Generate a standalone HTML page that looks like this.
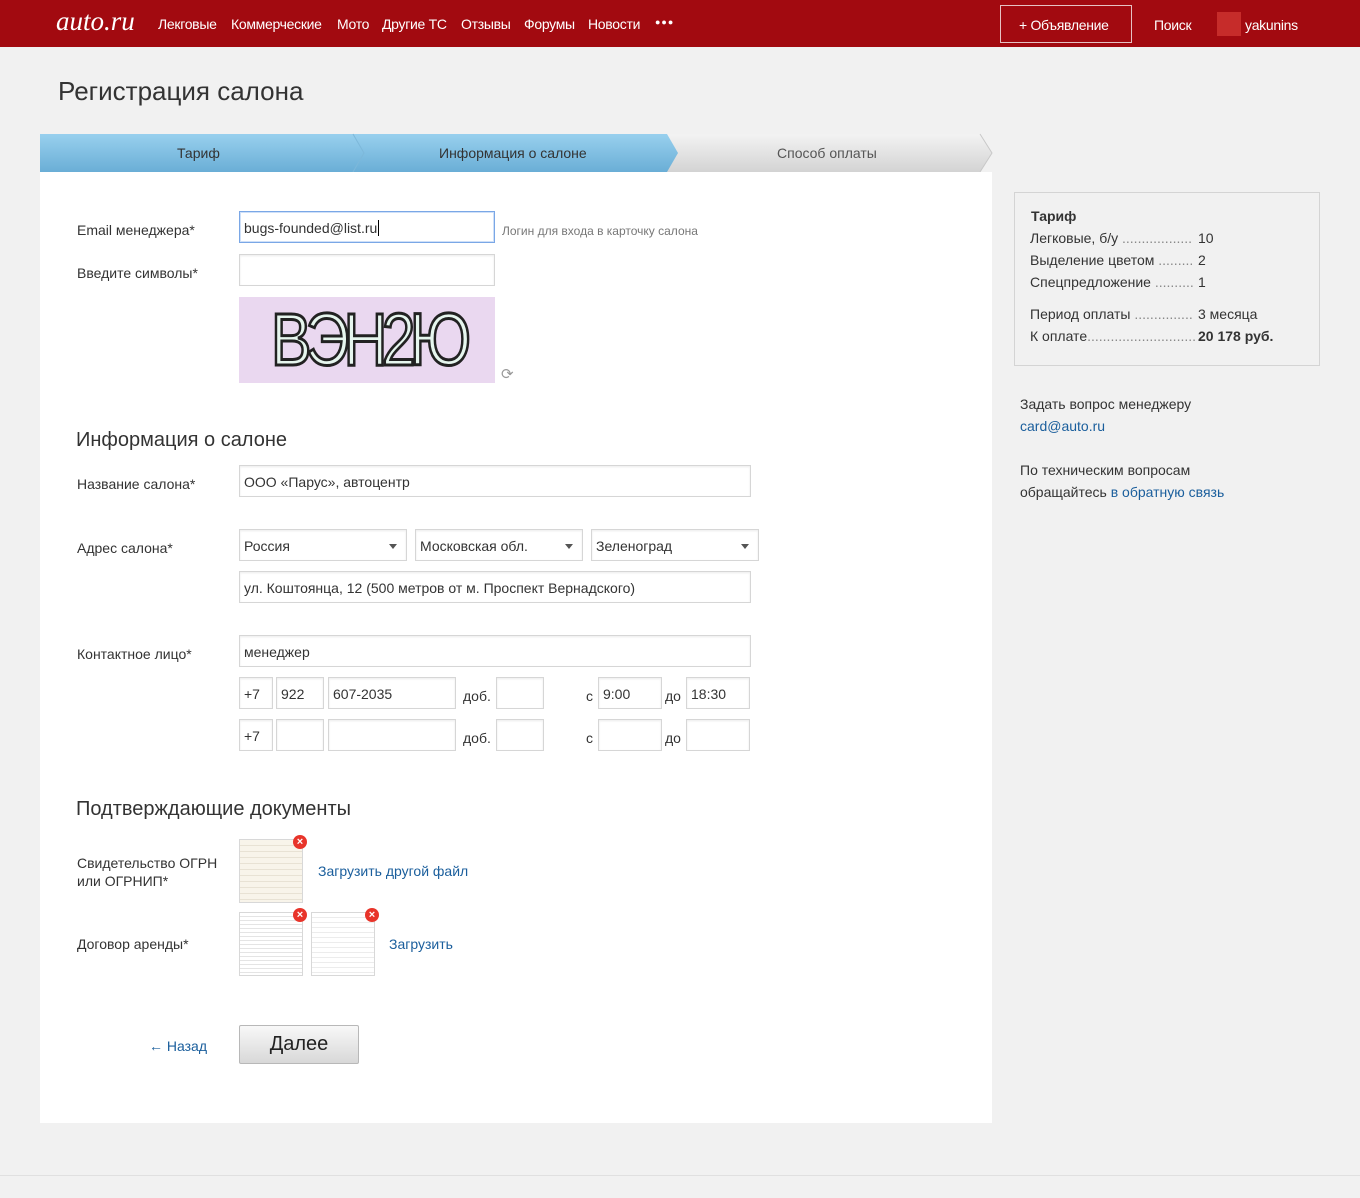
<!DOCTYPE html>
<html><head><meta charset="utf-8"><style>
*{box-sizing:border-box;margin:0;padding:0}
body{width:1360px;height:1198px;background:#f1f1f1;font-family:"Liberation Sans",Arial,sans-serif;color:#333;position:relative;overflow:hidden;font-size:14px}
.a{position:absolute;white-space:nowrap}
.hdr{position:absolute;left:0;top:0;width:1360px;height:47px;background:#a20a10}
.nav{color:#fff;font-size:14px;top:16px;letter-spacing:-0.3px}
.inp{position:absolute;background:#fff;border:1px solid #d6d6d6;box-shadow:inset 0 1px 2px rgba(0,0,0,.08);height:32px;font-size:14px;padding:8px 0 0 4px;color:#333;white-space:nowrap}
.lbl{position:absolute;font-size:14px;color:#333;white-space:nowrap}
.sel:after{content:"";position:absolute;right:9px;top:14px;border-left:4px solid transparent;border-right:4px solid transparent;border-top:5px solid #555}
.h2{position:absolute;font-size:20px;color:#333;white-space:nowrap}
.x{position:absolute;width:14px;height:14px;border-radius:50%;background:#e8342a;color:#fff;font-size:11px;font-weight:bold;line-height:14px;text-align:center}
.thumb{position:absolute;width:64px;height:64px;border:1px solid #d8d8d8;background:#fff}
.tr{position:absolute;font-size:14px;color:#333;white-space:nowrap}
.link{color:#1a5e9c !important}
</style></head><body>
<div class="hdr"></div>
<div class="a" style="left:56px;top:6px;font-family:'Liberation Serif',serif;font-style:italic;font-size:27px;color:#fff">auto.ru</div>
<div class="a nav" style="left:158px">Лекговые</div>
<div class="a nav" style="left:231px">Коммерческие</div>
<div class="a nav" style="left:337px">Мото</div>
<div class="a nav" style="left:382px">Другие ТС</div>
<div class="a nav" style="left:461px">Отзывы</div>
<div class="a nav" style="left:524px">Форумы</div>
<div class="a nav" style="left:588px">Новости</div>
<div class="a nav" style="left:655px;top:17px;font-size:9px;letter-spacing:1px">●●●</div>
<div class="a" style="left:1000px;top:5px;width:132px;height:38px;border:1px solid #e6c2c3"></div>
<div class="a nav" style="left:1019px;top:17px">+ Объявление</div>
<div class="a nav" style="left:1154px;top:17px">Поиск</div>
<div class="a" style="left:1217px;top:12px;width:24px;height:24px;background:#c62c2a"></div>
<div class="a nav" style="left:1245px;top:17px">yakunins</div>

<div class="a" style="left:58px;top:76px;font-size:26px;color:#333">Регистрация салона</div>

<svg class="a" style="left:40px;top:133px" width="955" height="40">
<defs>
<linearGradient id="b" x1="0" y1="0" x2="0" y2="1"><stop offset="0" stop-color="#98d0ee"/><stop offset="1" stop-color="#6aaed6"/></linearGradient>
<linearGradient id="g" x1="0" y1="0" x2="0" y2="1"><stop offset="0" stop-color="#f3f3f3"/><stop offset="1" stop-color="#d3d3d3"/></linearGradient>
</defs>
<polygon points="0,1 940,1 952,20 940,39 0,39" fill="url(#g)"/>
<polyline points="940,1 952,20 940,39" fill="none" stroke="#c8c8c8"/>
<polygon points="0,1 627,1 638,20 627,39 0,39" fill="url(#b)"/>
<polyline points="313,1 324,20 313,39" fill="none" stroke="#7db8da"/>
</svg>
<div class="a" style="left:177px;top:145px;font-size:14px;color:#333">Тариф</div>
<div class="a" style="left:439px;top:145px;font-size:14px;color:#333">Информация о салоне</div>
<div class="a" style="left:777px;top:145px;font-size:14px;color:#555">Способ оплаты</div>

<div class="a" style="left:40px;top:172px;width:952px;height:951px;background:#fff"></div>

<div class="lbl" style="left:77px;top:222px">Email менеджера*</div>
<div class="inp" style="left:239px;top:211px;width:256px;border-color:#7aa7e6;box-shadow:0 0 0 1px #cfe0f8 inset">bugs-founded@list.ru<span style="border-left:1px solid #000;margin-left:1px"></span></div>
<div class="a" style="left:502px;top:224px;font-size:12px;color:#777">Логин для входа в карточку салона</div>
<div class="lbl" style="left:77px;top:265px">Введите символы*</div>
<div class="inp" style="left:239px;top:254px;width:256px"></div>
<div class="a" style="left:239px;top:297px;width:256px;height:86px;background:#ead8f0;overflow:hidden">
<div class="a" style="left:32px;top:0px;font-family:'Liberation Sans',sans-serif;font-size:74px;color:#e6f6ee;-webkit-text-stroke:3px #222;letter-spacing:-7px;transform:scaleX(.82);transform-origin:left">ВЭН2Ю</div>
</div>
<div class="a" style="left:501px;top:365px;font-size:15px;color:#999">⟳</div>

<div class="h2" style="left:76px;top:429px">Информация о салоне</div>
<div class="lbl" style="left:77px;top:476px">Название салона*</div>
<div class="inp" style="left:239px;top:465px;width:512px">ООО «Парус», автоцентр</div>
<div class="lbl" style="left:77px;top:540px">Адрес салона*</div>
<div class="inp sel" style="left:239px;top:529px;width:168px">Россия</div>
<div class="inp sel" style="left:415px;top:529px;width:168px">Московская обл.</div>
<div class="inp sel" style="left:591px;top:529px;width:168px">Зеленоград</div>
<div class="inp" style="left:239px;top:571px;width:512px">ул. Коштоянца, 12 (500 метров от м. Проспект Вернадского)</div>
<div class="lbl" style="left:77px;top:646px">Контактное лицо*</div>
<div class="inp" style="left:239px;top:635px;width:512px">менеджер</div>

<div class="inp" style="left:239px;top:677px;width:34px">+7</div>
<div class="inp" style="left:276px;top:677px;width:48px">922</div>
<div class="inp" style="left:328px;top:677px;width:128px">607-2035</div>
<div class="lbl" style="left:463px;top:688px">доб.</div>
<div class="inp" style="left:496px;top:677px;width:48px"></div>
<div class="lbl" style="left:586px;top:688px">с</div>
<div class="inp" style="left:598px;top:677px;width:64px">9:00</div>
<div class="lbl" style="left:665px;top:688px">до</div>
<div class="inp" style="left:686px;top:677px;width:64px">18:30</div>

<div class="inp" style="left:239px;top:719px;width:34px">+7</div>
<div class="inp" style="left:276px;top:719px;width:48px"></div>
<div class="inp" style="left:328px;top:719px;width:128px"></div>
<div class="lbl" style="left:463px;top:730px">доб.</div>
<div class="inp" style="left:496px;top:719px;width:48px"></div>
<div class="lbl" style="left:586px;top:730px">с</div>
<div class="inp" style="left:598px;top:719px;width:64px"></div>
<div class="lbl" style="left:665px;top:730px">до</div>
<div class="inp" style="left:686px;top:719px;width:64px"></div>

<div class="h2" style="left:76px;top:798px">Подтверждающие документы</div>
<div class="lbl" style="left:77px;top:854px;line-height:18px">Свидетельство ОГРН<br>или ОГРНИП*</div>
<div class="thumb" style="left:239px;top:839px;background:repeating-linear-gradient(#f8f4ea 0 5px,#e8e2d4 5px 6px)"></div>
<div class="x" style="left:293px;top:835px">×</div>
<div class="a link" style="left:318px;top:863px;font-size:14px">Загрузить другой файл</div>
<div class="lbl" style="left:77px;top:936px">Договор аренды*</div>
<div class="thumb" style="left:239px;top:912px;background:repeating-linear-gradient(#fff 0 3px,#e4e4e4 3px 4px)"></div>
<div class="x" style="left:293px;top:908px">×</div>
<div class="thumb" style="left:311px;top:912px;background:repeating-linear-gradient(#fff 0 4px,#ececec 4px 5px)"></div>
<div class="x" style="left:365px;top:908px">×</div>
<div class="a link" style="left:389px;top:936px;font-size:14px">Загрузить</div>

<div class="a link" style="left:149px;top:1038px;font-size:14px">← Назад</div>
<div class="a" style="left:239px;top:1025px;width:120px;height:39px;border:1px solid #b8b8b8;border-radius:2px;background:linear-gradient(#f8f8f8,#d8d8d8);font-size:20px;text-align:center;line-height:37px;color:#222">Далее</div>

<div class="a" style="left:1014px;top:192px;width:306px;height:174px;border:1px solid #d4d4d4"></div>
<div class="tr" style="left:1031px;top:208px;font-weight:bold">Тариф</div>
<div class="tr" style="left:1030px;top:230px">Легковые, б/у <span style="color:#888">..................</span></div>
<div class="tr" style="left:1198px;top:230px">10</div>
<div class="tr" style="left:1030px;top:252px">Выделение цветом <span style="color:#888">.........</span></div>
<div class="tr" style="left:1198px;top:252px">2</div>
<div class="tr" style="left:1030px;top:274px">Спецпредложение <span style="color:#888">..........</span></div>
<div class="tr" style="left:1198px;top:274px">1</div>
<div class="tr" style="left:1030px;top:306px">Период оплаты <span style="color:#888">...............</span></div>
<div class="tr" style="left:1198px;top:306px">3 месяца</div>
<div class="tr" style="left:1030px;top:328px">К оплате<span style="color:#888">............................</span></div>
<div class="tr" style="left:1198px;top:328px;font-weight:bold">20 178 руб.</div>
<div class="tr" style="left:1020px;top:396px">Задать вопрос менеджеру</div>
<div class="tr link" style="left:1020px;top:418px">card@auto.ru</div>
<div class="tr" style="left:1020px;top:462px">По техническим вопросам</div>
<div class="tr" style="left:1020px;top:484px">обращайтесь <span class="link">в обратную связь</span></div>

<div class="a" style="left:0;top:1175px;width:1360px;height:1px;background:#e0e0e0"></div>
</body></html>
